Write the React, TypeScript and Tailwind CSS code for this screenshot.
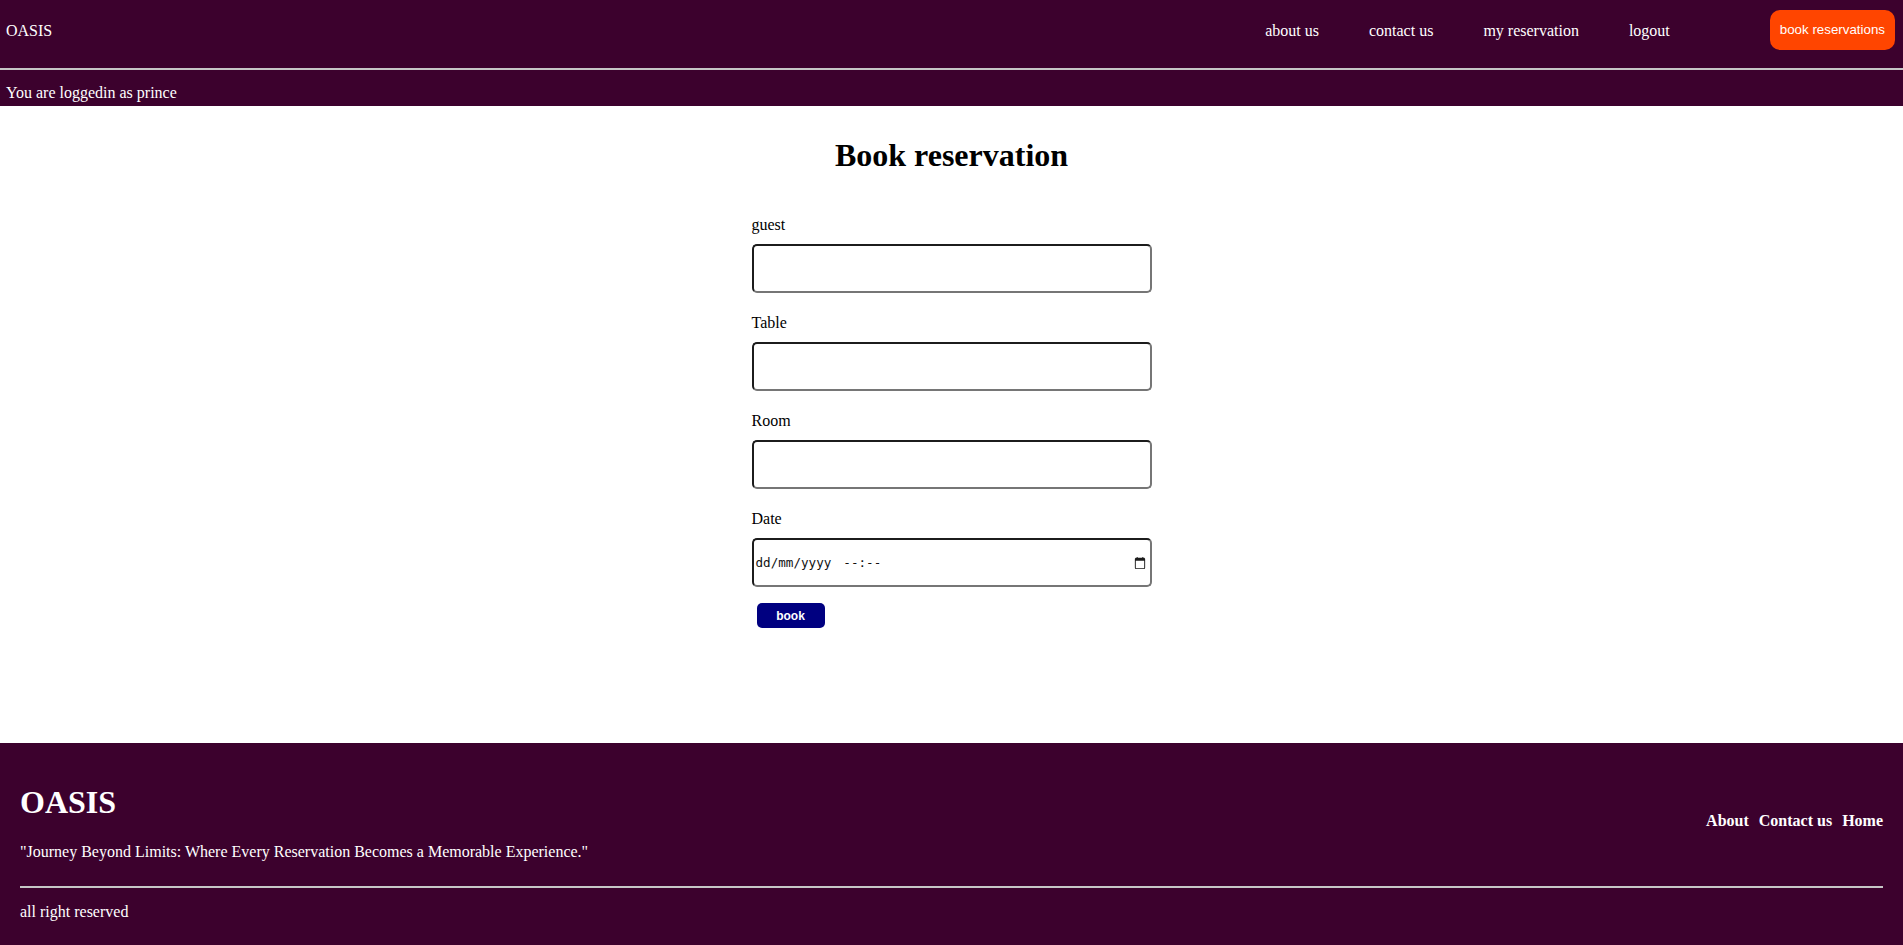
import React from "react";

const fields = ["guest", "Table", "Room"];

const inputBox =
  "w-[400px] h-[49px] mt-[10px] border-2 border-t-[#1c1c1c] border-l-[#1c1c1c] border-r-[#767676] border-b-[#767676] rounded-[5px] bg-white outline-none px-[2px]";

function CalendarIcon() {
  return (
    <svg width="14" height="14" viewBox="0 0 15 15" className="text-[#1c1c1c]">
      <path
        fill="currentColor"
        d="M11.5 2H11V1h-1v1H5V1H4v1h-.5C2.67 2 2 2.67 2 3.5v9c0 .83.67 1.5 1.5 1.5h8c.83 0 1.5-.67 1.5-1.5v-9c0-.83-.67-1.5-1.5-1.5zm.5 10.5c0 .28-.22.5-.5.5h-8c-.28 0-.5-.22-.5-.5V5h9v7.5z"
      />
    </svg>
  );
}

export default function App() {
  return (
    <div className="h-[945px] flex flex-col bg-white text-black font-['Liberation_Serif',serif]">
      {/* top bar */}
      <header className="bg-[#3c012d] text-white">
        <div className="h-[58px] flex items-center pl-[6px] pr-[8px]">
          <span className="mt-[4px] text-[16px] leading-[18px]">OASIS</span>
          <nav className="ml-auto mt-[4px] flex items-center gap-[50px] text-[16px] leading-[18px]">
            <a href="#">about us</a>
            <a href="#">contact us</a>
            <a href="#">my reservation</a>
            <a href="#">logout</a>
          </nav>
          <button className="ml-[100px] mt-[2px] h-[40px] px-[10px] rounded-[10px] bg-[#ff4500] text-white text-[13.33px] leading-[16px] font-['Liberation_Sans',Arial,sans-serif]">
            book reservations
          </button>
        </div>
        <div className="mt-[10px] h-[2px] bg-[#c6c6c6]" />
        <div className="h-[36px] pt-[14px] pl-[6px] text-[16px] leading-[18px]">
          You are loggedin as prince
        </div>
      </header>

      {/* booking form */}
      <main className="flex-1 flex flex-col items-center">
        <h1 className="mt-[31px] text-[32px] leading-[37px] font-bold">Book reservation</h1>
        <form
          className="mt-[42px] w-[400px] flex flex-col"
          onSubmit={(e) => e.preventDefault()}
        >
          {fields.map((f) => (
            <div key={f} className="flex flex-col mb-[21px]">
              <label className="text-[16px] leading-[18px]">{f}</label>
              <input type="text" className={inputBox} />
            </div>
          ))}
          <div className="flex flex-col">
            <label className="text-[16px] leading-[18px]">Date</label>
            <div className={inputBox + " flex items-center pr-[3px]"}>
              <span className="font-['DejaVu_Sans_Mono',monospace] text-[12.6px] leading-[16px] text-[#111]">
                dd/mm/yyyy
              </span>
              <span className="ml-[12px] font-['DejaVu_Sans_Mono',monospace] text-[12.6px] leading-[16px] text-[#111]">
                --:--
              </span>
              <span className="ml-auto flex">
                <CalendarIcon />
              </span>
            </div>
          </div>
          <div>
            <button
              type="submit"
              className="mt-[16px] ml-[5px] w-[68px] h-[25px] rounded-[5px] bg-[#000080] text-white text-[12px] font-bold font-['Liberation_Sans',Arial,sans-serif]"
            >
              book
            </button>
          </div>
        </form>
      </main>

      {/* footer */}
      <footer className="bg-[#3c012d] text-white px-[20px] pt-[20px] h-[202px]">
        <div className="grid grid-cols-[1fr_auto] items-start">
          <div className="pt-[21px] pb-[16px]">
            <h2 className="text-[32px] leading-[37px] font-bold">OASIS</h2>
            <p className="mt-[22px] text-[16px] leading-[18px]">
              "Journey Beyond Limits: Where Every Reservation Becomes a Memorable Experience."
            </p>
          </div>
          <ul className="pt-[49px] flex gap-[10px] text-[16px] leading-[18px] font-bold">
            <li>About</li>
            <li>Contact us</li>
            <li>Home</li>
          </ul>
        </div>
        <div className="mt-[9px] h-[2px] bg-[#c6c6c6]" />
        <p className="mt-[15px] text-[16px] leading-[18px]">all right reserved</p>
      </footer>
    </div>
  );
}
